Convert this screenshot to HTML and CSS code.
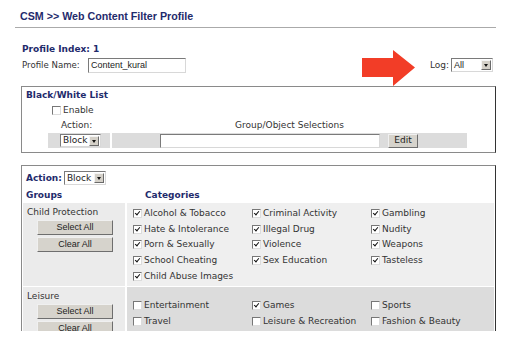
FILE: index.html
```html
<!DOCTYPE html>
<html lang="en">
<head>
    <meta charset="UTF-8">
    <meta name="viewport" content="width=device-width, initial-scale=1.0">
    <title>CSM - Web Content Filter Profile</title>
    <link rel="stylesheet" href="styles.css">
</head>
<body>
    <div class="page">
        <h1 class="title">CSM &gt;&gt; Web Content Filter Profile</h1>
        <div class="rule"></div>

        <div class="profile">
            <div class="profile-info">
                <div class="profile-index">Profile Index: 1</div>
                <div class="profile-name">
                    <span class="label">Profile Name:</span>
                    <span class="textbox name-box">Content_kural</span>
                </div>
            </div>
            <div class="log">
                <span>Log:</span>
                <span class="select log-select"><span class="select-text arial">All</span><span class="select-btn"></span></span>
            </div>
            <svg class="arrow" width="53" height="36" viewBox="0 0 53 36">
                <polygon points="0,8 31,8 31,0 53,17.5 31,36 31,27 0,27" fill="#f23d27"/>
            </svg>
        </div>

        <div class="panel bwlist">
            <div class="panel-title">Black/White List</div>
            <div class="enable-row"><span class="cb"></span><span>Enable</span></div>
            <div class="bw-table">
                <div class="bw-head-action">Action:</div>
                <div class="bw-head-groups">Group/Object Selections</div>
                <div class="bw-cell-action">
                    <span class="select bw-select"><span class="select-text">Block</span><span class="select-btn"></span></span>
                </div>
                <div class="bw-cell-groups">
                    <span class="textbox group-box"></span>
                    <span class="btn edit-btn">Edit</span>
                </div>
            </div>
        </div>

        <div class="panel filter">
            <div class="action-row">
                <span class="bold">Action:</span>
                <span class="select action-select"><span class="select-text">Block</span><span class="select-btn"></span></span>
            </div>
            <div class="group-head">
                <div class="bold">Groups</div>
                <div class="bold cat-head">Categories</div>
            </div>

            <div class="group-row">
                <div class="group-cell">
                    <div class="group-name">Child Protection</div>
                    <span class="btn group-btn">Select All</span>
                    <span class="btn group-btn">Clear All</span>
                </div>
                <div class="cat-cell">
                    <div class="cat"><span class="cb on"></span>Alcohol &amp; Tobacco</div>
                    <div class="cat"><span class="cb on"></span>Criminal Activity</div>
                    <div class="cat"><span class="cb on"></span>Gambling</div>
                    <div class="cat"><span class="cb on"></span>Hate &amp; Intolerance</div>
                    <div class="cat"><span class="cb on"></span>Illegal Drug</div>
                    <div class="cat"><span class="cb on"></span>Nudity</div>
                    <div class="cat"><span class="cb on"></span>Porn &amp; Sexually</div>
                    <div class="cat"><span class="cb on"></span>Violence</div>
                    <div class="cat"><span class="cb on"></span>Weapons</div>
                    <div class="cat"><span class="cb on"></span>School Cheating</div>
                    <div class="cat"><span class="cb on"></span>Sex Education</div>
                    <div class="cat"><span class="cb on"></span>Tasteless</div>
                    <div class="cat"><span class="cb on"></span>Child Abuse Images</div>
                </div>
            </div>

            <div class="group-row alt">
                <div class="group-cell">
                    <div class="group-name">Leisure</div>
                    <span class="btn group-btn">Select All</span>
                    <span class="btn group-btn">Clear All</span>
                </div>
                <div class="cat-cell">
                    <div class="cat"><span class="cb"></span>Entertainment</div>
                    <div class="cat"><span class="cb on"></span>Games</div>
                    <div class="cat"><span class="cb"></span>Sports</div>
                    <div class="cat"><span class="cb"></span>Travel</div>
                    <div class="cat"><span class="cb"></span>Leisure &amp; Recreation</div>
                    <div class="cat"><span class="cb"></span>Fashion &amp; Beauty</div>
                </div>
            </div>
        </div>
    </div>
</body>
</html>
```

FILE: styles.css
```css
* {
    margin: 0;
    padding: 0;
    box-sizing: border-box;
}

body {
    background-color: #fff;
    font-family: 'DejaVu Sans', Verdana, sans-serif;
    font-size: 9px;
    line-height: 11px;
    color: #333;
}

.page {
    width: 496px;
    height: 347px;
    padding: 10px 0 0 15px;
    overflow: hidden;
}

.title {
    margin-left: 5px;
    font-family: 'Liberation Sans', Arial, sans-serif;
    font-size: 10.7px;
    line-height: 12px;
    font-weight: bold;
    color: #1f2b6c;
}

.rule {
    margin-top: 5px;
    border-top: 1px solid #aaa;
}

.bold {
    font-weight: bold;
    color: #1f2b6c;
}

.arial {
    font-family: 'Liberation Sans', Arial, sans-serif;
}

/* profile */

.profile {
    position: relative;
    display: flex;
    justify-content: space-between;
    margin-top: 16px;
    padding-left: 7px;
}

.profile-index {
    font-weight: bold;
    color: #1f2b6c;
}

.profile-name {
    display: flex;
    align-items: center;
    height: 15px;
    margin-top: 3px;
}

.profile-name .label {
    width: 66px;
    font-size: 8.6px;
}

.textbox {
    display: inline-block;
    background-color: #fff;
    border: 1px solid;
    border-color: #7a7a7a #d8d8d8 #d8d8d8 #7a7a7a;
}

.name-box {
    width: 98px;
    height: 15px;
    padding-left: 2px;
    font-family: 'Liberation Sans', Arial, sans-serif;
    line-height: 13px;
    color: #222;
}

.log {
    display: flex;
    align-items: center;
    gap: 2px;
    margin-top: 14px;
    margin-right: 3px;
    height: 14px;
}

.arrow {
    position: absolute;
    left: 347px;
    top: 6px;
}

/* select boxes */

.select {
    display: inline-flex;
    align-items: center;
    height: 14px;
    background-color: #fff;
    border: 1px solid;
    border-color: #7a7a7a #d8d8d8 #d8d8d8 #7a7a7a;
    color: #222;
}

.select-text {
    flex: 1;
    padding-left: 2px;
}

.select-btn {
    position: relative;
    width: 10px;
    height: 10px;
    margin-right: 1px;
    background-color: #d4d0c8;
    border: 1px solid;
    border-color: #f4f4f4 #6a6a6a #6a6a6a #f4f4f4;
}

.select-btn::after {
    content: '';
    position: absolute;
    left: 2px;
    top: 3px;
    border-left: 2px solid transparent;
    border-right: 2px solid transparent;
    border-top: 3px solid #111;
}

.log-select {
    width: 42px;
}

.bw-select {
    width: 41px;
    height: 13px;
}

.action-select {
    width: 42px;
}

/* buttons */

.btn {
    display: flex;
    align-items: center;
    justify-content: center;
    background-color: #d6d3cc;
    border: 1px solid;
    border-color: #f0f0f0 #6e6e6e #6e6e6e #f0f0f0;
    font-family: 'Liberation Sans', Arial, sans-serif;
    color: #222;
}

/* panels */

.panel {
    width: 475px;
    margin-left: 6px;
    border: 1px solid #8a8a8a;
    border-right-color: #333;
}

.bwlist {
    margin-top: 13px;
    padding: 3px 0 4px 4px;
}

.panel-title {
    font-weight: bold;
    color: #1f2b6c;
}

.enable-row {
    display: flex;
    align-items: center;
    gap: 2px;
    margin-top: 4px;
    margin-left: 26px;
}

.bw-table {
    display: grid;
    grid-template-columns: 62px 355px;
    column-gap: 2px;
    margin-top: 4px;
    margin-left: 22px;
}

.bw-head-action {
    padding-left: 13px;
}

.bw-head-groups {
    text-align: center;
}

.bw-cell-action,
.bw-cell-groups {
    display: flex;
    align-items: center;
    height: 15px;
    margin-top: 2px;
    background-color: #dcdcdc;
}

.bw-cell-action {
    padding-left: 12px;
}

.bw-cell-groups {
    gap: 8px;
    padding-left: 48px;
}

.group-box {
    width: 220px;
    height: 14px;
}

.edit-btn {
    width: 30px;
    height: 14px;
    font-family: 'DejaVu Sans', Verdana, sans-serif;
}

/* filter panel */

.filter {
    height: 166px;
    margin-top: 12px;
    padding: 5px 1px 0 1px;
    border-bottom: none;
    overflow: hidden;
}

.action-row {
    display: flex;
    align-items: center;
    gap: 2px;
    height: 14px;
    padding-left: 3px;
}

.group-head {
    display: grid;
    grid-template-columns: 102px 1fr;
    column-gap: 2px;
    height: 14px;
    margin-top: 4px;
    padding: 1px 0 0 3px;
}

.cat-head {
    padding-left: 15px;
}

.group-row {
    display: grid;
    grid-template-columns: 102px 1fr;
    column-gap: 2px;
    margin-bottom: 1px;
}

.group-cell {
    display: flex;
    flex-direction: column;
    gap: 2px;
    padding: 4px 0 0 4px;
    background-color: #ebebeb;
}

.group-name {
    margin-bottom: 0;
}

.group-btn {
    width: 76px;
    height: 15px;
    margin-left: 10px;
    font-size: 9px;
}

.cat-cell {
    display: grid;
    grid-template-columns: 119px 119px 1fr;
    grid-auto-rows: 15.6px;
    align-content: start;
    padding: 3px 0 2px 6px;
    background-color: #efefef;
}

.alt .cat-cell {
    padding-top: 11px;
    background-color: #dcdcdc;
}

.cat {
    display: flex;
    align-items: center;
    gap: 2px;
    white-space: nowrap;
}

/* checkboxes */

.cb {
    position: relative;
    display: inline-block;
    width: 9px;
    height: 9px;
    background-color: #fff;
    border: 1px solid;
    border-color: #777 #dcdcdc #dcdcdc #777;
    flex-shrink: 0;
}

.cb.on::after {
    content: '';
    position: absolute;
    left: 2px;
    top: 0;
    width: 2px;
    height: 4px;
    border: solid #111;
    border-width: 0 1.5px 1.5px 0;
    transform: rotate(40deg);
}
```
